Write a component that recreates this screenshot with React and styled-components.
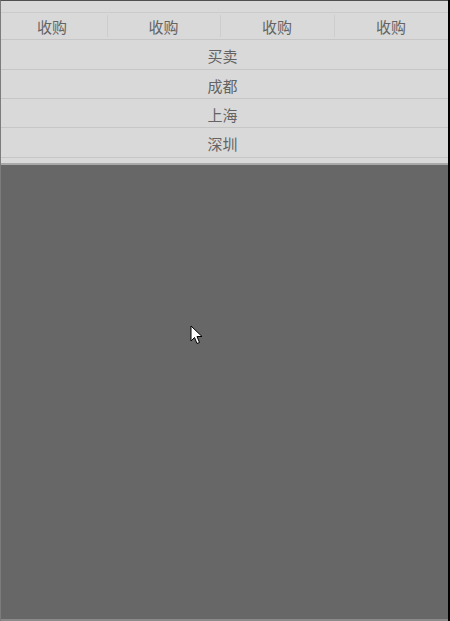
import React from "react";
import styled, { createGlobalStyle } from "styled-components";

const GlobalStyle = createGlobalStyle`
  html, body {
    margin: 0;
    padding: 0;
    height: 100%;
    background: #000;
  }
  #root {
    height: 100%;
  }
`;

const tabs = ["收购", "收购", "收购", "收购"];
const rows = [
  { name: "买卖", h: 30 },
  { name: "成都", h: 29 },
  { name: "上海", h: 29 },
  { name: "深圳", h: 30 },
];

const App = () => {
  return (
    <>
      <GlobalStyle />
      <Screen>
        <Main>
          <Panel>
            <TopStrip />
            <TabRow>
              {tabs.map((t, i) => (
                <Tab key={i} first={i === 0}>
                  <span>{t}</span>
                </Tab>
              ))}
            </TabRow>
            {rows.map((r) => (
              <Row key={r.name} h={r.h}>
                {r.name}
              </Row>
            ))}
            <PanelFoot />
          </Panel>
          <Mask>
            <Cursor width="14" height="20" viewBox="0 0 14 20">
              <path
                d="M1 1 L1 16 L4.5 12.5 L7 18.5 L9.5 17.5 L7 11.5 L12 11.5 Z"
                fill="#fff"
                stroke="#000"
                strokeWidth="1"
                strokeLinejoin="miter"
              />
            </Cursor>
          </Mask>
          <BottomLine />
        </Main>
        <Edge />
      </Screen>
    </>
  );
};

const Screen = styled.div`
  display: flex;
  width: 450px;
  height: 621px;
`;

const Main = styled.div`
  flex: 1;
  display: flex;
  flex-direction: column;
  border-top: 1px solid #505050;
  border-left: 1px solid #7c7c7c;
  background: #676767;
  position: relative;
`;

const Edge = styled.div`
  width: 2px;
  background: #000;
`;

const Panel = styled.div`
  background: #d9d9d9;
  font-family: "Noto Sans CJK SC", "Liberation Sans", sans-serif;
  color: #646464;
  font-size: 15px;
  border-bottom: 2px solid #a9a9a9;
`;

const TopStrip = styled.div`
  height: 11px;
  border-bottom: 1px solid #cbcbcb;
`;

const TabRow = styled.div`
  display: grid;
  grid-template-columns: 106px 113px 114px 1fr;
  height: 26px;
  border-bottom: 1px solid #c6c6c6;
`;

const Tab = styled.div`
  display: flex;
  align-items: center;
  justify-content: center;
  position: relative;
  line-height: 1;
  padding-right: ${({ first }) => (first ? "4px" : "0")};

  &::before {
    content: "";
    display: ${({ first }) => (first ? "none" : "block")};
    position: absolute;
    left: 0;
    top: 2px;
    bottom: 2px;
    width: 1px;
    background: #cdcdcd;
  }
`;

const Row = styled.div`
  height: ${({ h }) => h}px;
  display: flex;
  align-items: center;
  justify-content: center;
  padding-right: 4px;
  padding-top: 2px;
  box-sizing: border-box;
  border-bottom: 1px solid #c6c6c6;
  line-height: 1;
`;

const PanelFoot = styled.div`
  height: 5px;
`;

const Mask = styled.div`
  flex: 1;
  background: #676767;
  position: relative;
`;

const Cursor = styled.svg`
  position: absolute;
  left: 189px;
  top: 160px;
`;

const BottomLine = styled.div`
  height: 2px;
  background: #8a8a8a;
`;

export default App;
